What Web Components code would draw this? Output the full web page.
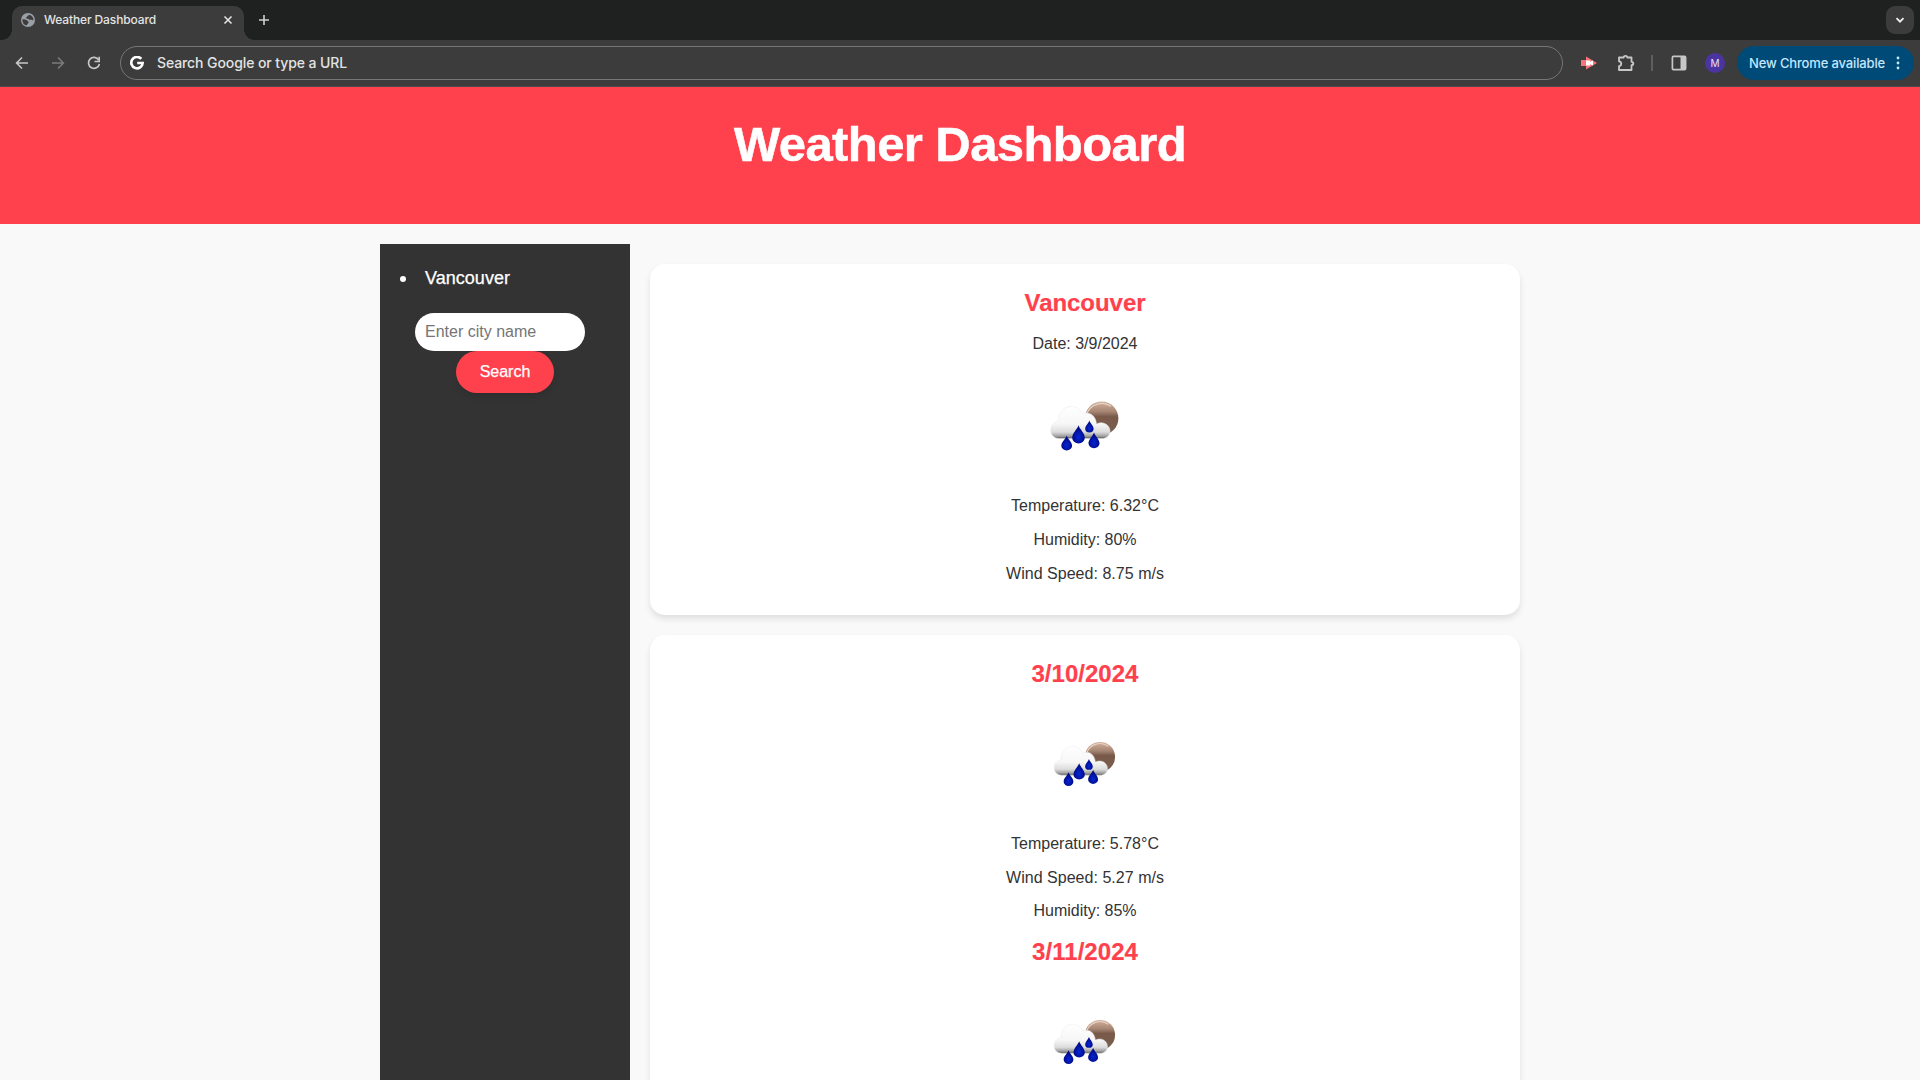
<!DOCTYPE html>
<html lang="en"><head><meta charset="utf-8"><title>Weather Dashboard</title>
<style>
html,body{margin:0;height:100%;overflow:hidden}
body{background:#f9f9f9;color:#333;font-family:"Liberation Sans",Arial,sans-serif;font-size:16px}
</style></head><body>
<weather-app></weather-app>
<script>
const define = (name, html, init) => customElements.define(name, class extends HTMLElement {
  connectedCallback() {
    if (this.shadowRoot) return;
    const root = this.attachShadow({ mode: 'open' });
    root.innerHTML = html;
    if (init) init(root, this);
  }
});

/* One line of text held to a fixed width, whatever the font's own advance */
define('fit-text', `<style>
:host{display:block;white-space:nowrap}
span{display:inline-block}
</style><span><slot></slot></span>`, (root, el) => {
  const want = parseFloat(el.getAttribute('w'));
  const n = el.textContent.length;
  const s = root.querySelector('span');
  const have = s.getBoundingClientRect().width;
  if (want && have) s.style.letterSpacing = ((want - have) / n) + 'px';
});

define('tab-strip', `<style>
:host{display:flex;height:40px;background:#1f2120;box-sizing:border-box;padding:6px 6px 0 12px;justify-content:space-between}
.left{display:flex}
.tab{position:relative;display:flex;align-items:center;width:232px;height:34px;background:#3c3c3c;border-radius:10px 10px 0 0;box-sizing:border-box;padding:0 9px 6px;color:#e3e3e3;font:500 12px Inter,sans-serif}
.tab::before,.tab::after{content:"";position:absolute;bottom:0;width:10px;height:10px}
.tab::before{left:-10px;background:radial-gradient(circle at 0 0,transparent 9.5px,#3c3c3c 10px)}
.tab::after{right:-10px;background:radial-gradient(circle at 100% 0,transparent 9.5px,#3c3c3c 10px)}
.tab fit-text{margin-left:9px;flex:1;line-height:16px}
.plus{margin:6px 0 0 12px}
svg{display:block}
.more{width:28px;height:28px;border-radius:9px;background:#3c3c3c;display:grid;place-items:center}
</style>
<div class="left"><div class="tab">
<svg width="14" height="14" viewBox="0 0 14 14"><circle cx="7" cy="7" r="7" fill="#9aa0a6"/><path d="M1.500 6.200c1.500 0 4 .3 4.700 1.300.5 1 1.500.6 1.300 1.900-.1 1.200-1.500 1.200-1.700 2.900C3 12 1.200 9.500 1.500 6.200zM8.200 1.700c-.3 1-1.600.7-1.800 1.500-.1.900-1.500.6-1.300 1.600.2.800 1.800.2 2.300.9.500 1 .8 1.300 2.100 1 1.200-.2 1.500.6 2.900.5C12.500 4.500 11 2.200 8.200 1.700z" fill="#3c3c3c"/></svg>
<fit-text w="112">Weather Dashboard</fit-text>
<svg width="14" height="14" viewBox="0 0 14 14"><path d="M3.500 3.500l7 7M10.500 3.500l-7 7" stroke="#e3e3e3" stroke-width="1.600"/></svg></div>
<svg class="plus" width="16" height="16" viewBox="0 0 16 16"><path d="M8 3v10M3 8h10" stroke="#d0d0d0" stroke-width="1.600"/></svg></div>
<div class="more"><svg width="12" height="12" viewBox="0 0 12 12"><path d="M2.500 4.200L6 7.700l3.500-3.500" fill="none" stroke="#eee" stroke-width="1.900"/></svg></div>`);

define('tool-bar', `<style>
:host{display:flex;align-items:center;height:47px;background:#3c3c3c;box-sizing:border-box;padding:0 6px 1px 15px;font-family:Inter,sans-serif;border-bottom:1px solid #4a4a4a}
:host>*,svg{flex:none}
svg{display:block}
.nav{display:flex;gap:22px;width:105px}
.omni{display:flex;align-items:center;width:1443px;height:34px;box-sizing:border-box;border:1px solid #757775;border-radius:17px;padding-left:9px;color:#e3e3e3;font-size:14px;font-weight:500}
.omni fit-text{margin-left:13px}
.ext{margin-left:17px}.puz{margin-left:19px}
.sep{width:2px;height:16px;background:#5e5e5e;margin-left:16px}
.panel{margin-left:18px}
.me{width:20px;height:20px;border-radius:50%;background:#4c34a0;color:#e6e0f5;font-size:10px;display:grid;place-items:center;margin-left:18px}
.up{margin-left:auto;width:177px;height:34px;border-radius:17px;background:#004a77;color:#c2e7ff;display:flex;align-items:center;box-sizing:border-box;padding-left:12px;font-size:13px;font-weight:500}
.up svg{margin-left:11px}
</style>
<div class="nav">
<svg width="14" height="14" viewBox="0 0 14 14"><path d="M13 7H2M7 1.500L1.600 7 7 12.500" fill="none" stroke="#c7c7c7" stroke-width="1.600"/></svg>
<svg width="14" height="14" viewBox="0 0 14 14"><path d="M1 7h11M7 1.500L12.400 7 7 12.500" fill="none" stroke="#7b7b7b" stroke-width="1.600"/></svg>
<svg width="14" height="14" viewBox="0 0 14 14"><path d="M11.700 4A5.500 5.500 0 1 0 12.400 8" fill="none" stroke="#c7c7c7" stroke-width="1.700"/><path d="M12.200.8v4.700H7.500" fill="none" stroke="#c7c7c7" stroke-width="1.600"/></svg>
</div>
<div class="omni"><svg width="14" height="14" viewBox="0 0 14 14"><path d="M11.300 2.900A5.700 5.700 0 1 0 12.700 7H7.200" fill="none" stroke="#fff" stroke-width="2.600"/></svg><fit-text w="190">Search Google or type a URL</fit-text></div>
<svg class="ext" width="18" height="16" viewBox="0 0 18 16"><path d="M1 5h5V1.500L17 8 6 14.500V11H1z" fill="#f7747b"/><path d="M6 5.500h4v1.200l3-1.200v5l-3-1.200v1.200H6z" fill="#fff"/></svg>
<svg class="puz" width="18" height="18" viewBox="0 0 18 18"><path d="M2 3.500h4.700c0-2.200 3.600-2.200 3.600 0h4.200v4.300c2.400 0 2.400 3.400 0 3.400v4.800H2v-3.800c3-.3 3-4.600 0-4.900z" fill="none" stroke="#c7c7c7" stroke-width="1.800" stroke-linejoin="round"/></svg>
<div class="sep"></div>
<svg class="panel" width="16" height="16" viewBox="0 0 16 16"><rect x="1.400" y="1.400" width="13.200" height="13.200" rx="1" fill="none" stroke="#c7c7c7" stroke-width="1.700"/><path d="M9.500 1h5.500v14H9.500z" fill="#c7c7c7"/></svg>
<div class="me">M</div>
<div class="up"><fit-text w="136">New Chrome available</fit-text><svg width="4" height="14" viewBox="0 0 4 14" fill="#c2e7ff"><circle cx="2" cy="2" r="1.400"/><circle cx="2" cy="7" r="1.400"/><circle cx="2" cy="12" r="1.400"/></svg></div>`);

define('page-header', `<style>
:host{display:flex;justify-content:center;height:137px;background:#ff414d;color:#fff}
h1{margin:29px 0 0;font-size:49px;line-height:56px;font-weight:700;-webkit-text-stroke:.5px #fff}
</style><h1><slot></slot></h1>`);

define('city-sidebar', `<style>
:host{display:block;width:250px;background:#333;color:#fff;box-sizing:border-box;padding-top:20px}
.item{display:flex;align-items:center;height:29px;font-size:18px;padding-left:20px;-webkit-text-stroke:.25px #fff}
.item i{width:6px;height:6px;border-radius:50%;background:#fff;margin-right:19px}
form{display:flex;flex-direction:column;align-items:center;margin-top:20px}
input{width:170px;height:38px;margin:0 10px 0 0;border:0;border-radius:20px;padding:0 10px;box-sizing:border-box;font:16px "Liberation Sans",Arial,sans-serif;background:#fff}
input::placeholder{color:#757575}
button{width:98px;height:42px;border:0;border-radius:21px;background:#ff414d;color:#fff;font:16px "Liberation Sans",Arial,sans-serif;padding:0 0 1px;box-shadow:0 4px 6px rgba(0,0,0,.1);display:grid;place-items:center;-webkit-text-stroke:.25px #fff}
</style>
<div class="item"><i></i><fit-text w="85">Vancouver</fit-text></div>
<form><input placeholder="Enter city name"><button type="button">Search</button></form>`);

define('rain-icon', `<style>:host{display:block}svg{display:block;width:100%;height:100%}</style>
<svg viewBox="0 0 100 100"><defs>
<linearGradient id="m" x1="0" y1="0" x2="0" y2="1"><stop offset="0" stop-color="#d3b39f"/><stop offset=".3" stop-color="#a58472"/><stop offset=".45" stop-color="#79594a"/><stop offset="1" stop-color="#79604f"/></linearGradient>
<linearGradient id="c" gradientUnits="userSpaceOnUse" x1="0" y1="29" x2="0" y2="61.500"><stop offset="0" stop-color="#fff"/><stop offset=".55" stop-color="#f7f7f7"/><stop offset=".8" stop-color="#dcdcdc"/><stop offset=".93" stop-color="#a0a0a0"/><stop offset="1" stop-color="#555"/></linearGradient>
<radialGradient id="d" cx=".5" cy=".65" r=".5"><stop offset="0" stop-color="#0725d8"/><stop offset="1" stop-color="#000b83"/></radialGradient>
<path id="p" d="M0-9C1-5 6-1 6 4A6 5.800 0 0 1-6 4C-6-1-1-5 0-9z" fill="url(#d)"/></defs>
<circle cx="66.700" cy="43.300" r="16.700" fill="url(#m)"/>
<path d="M52 38.300a16 16 0 0 1 24-7" fill="none" stroke="#ead2c4" stroke-width="1.300"/>
<path transform="translate(0 2)" d="M24 61.500C13 61 13 46 23.500 44C23 29 41 24 47.500 36.500C56 34 61 40 61.500 47C68 43.500 75 48 75 54C75 59 71 61.500 67 61.500z" fill="url(#c)" stroke="#e8e8e8" stroke-width=".5"/>
<use href="#p" transform="translate(43.500 59) scale(1.050 .96)"/>
<use href="#p" transform="translate(54.400 51.300) scale(.7 .64)"/>
<use href="#p" transform="translate(31.700 67.600) scale(.9 .8)"/>
<use href="#p" transform="translate(59 65) scale(.92 .84)"/></svg>`);

define('weather-card', `<style>
:host{display:flex;flex-direction:column;align-items:center;background:#fff;border-radius:15px;box-shadow:0 4px 6px rgba(0,0,0,.1);box-sizing:border-box;padding-top:21px}
</style><slot></slot>`);
define('card-title', `<style>
:host{display:block;height:36px;font-size:24px;line-height:36px;font-weight:700;color:#ff414d;-webkit-text-stroke:.2px #ff414d}
</style><slot></slot>`);
define('card-line', `<style>
:host{display:block;height:var(--row,34px);line-height:var(--row,34px);color:#333;font-size:16px}
</style><slot></slot>`);

define('weather-app', `<style>
:host{display:flex;flex-direction:column;height:1080px;overflow:hidden}
main{display:flex;justify-content:center;gap:20px;padding:20px 20px 0 0;flex:1;min-height:0}
section{display:flex;flex-direction:column;gap:20px;width:870px;padding-top:20px}
.now{height:351px;flex:none}
.next{height:700px;flex:none;--row:33.600px}
.now rain-icon{width:100px;height:100px;margin:14px 0}
.now card-title{margin-bottom:6px}
.next rain-icon{width:90px;height:90px;margin:26px 0 19px}
.next card-line + card-title{margin-top:6px}
</style>
<tab-strip></tab-strip><tool-bar></tool-bar>
<page-header><fit-text w="452">Weather Dashboard</fit-text></page-header>
<main><city-sidebar></city-sidebar>
<section>
<weather-card class="now"><card-title><fit-text w="121">Vancouver</fit-text></card-title>
<card-line><fit-text w="105">Date: 3/9/2024</fit-text></card-line>
<rain-icon></rain-icon>
<card-line><fit-text w="148">Temperature: 6.32°C</fit-text></card-line>
<card-line><fit-text w="103">Humidity: 80%</fit-text></card-line>
<card-line><fit-text w="158">Wind Speed: 8.75 m/s</fit-text></card-line></weather-card>
<weather-card class="next"><card-title><fit-text w="107">3/10/2024</fit-text></card-title>
<rain-icon></rain-icon>
<card-line><fit-text w="148">Temperature: 5.78°C</fit-text></card-line>
<card-line><fit-text w="158">Wind Speed: 5.27 m/s</fit-text></card-line>
<card-line><fit-text w="103">Humidity: 85%</fit-text></card-line>
<card-title><fit-text w="106">3/11/2024</fit-text></card-title>
<rain-icon></rain-icon></weather-card>
</section></main>`);
</script></body></html>
